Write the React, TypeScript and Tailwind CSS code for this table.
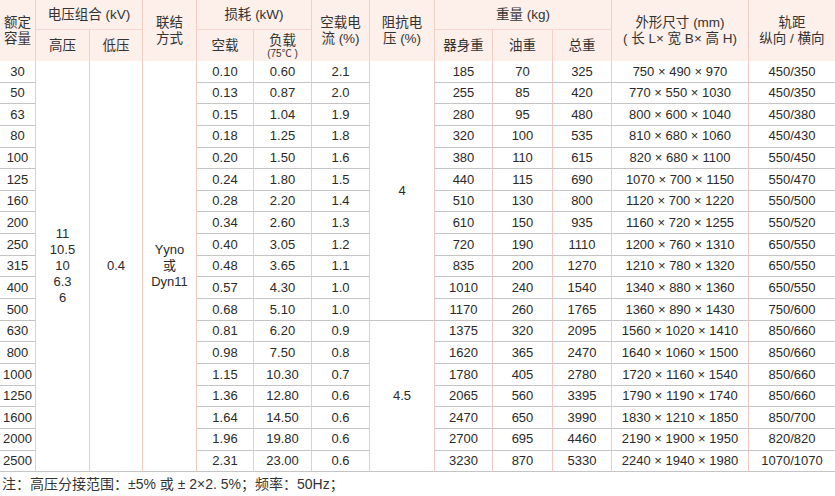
import React from "react";

const rows: [string, string, string, string, string, string, string, string, string][] = [
  ["30", "0.10", "0.60", "2.1", "185", "70", "325", "750 × 490 × 970", "450/350"],
  ["50", "0.13", "0.87", "2.0", "255", "85", "420", "770 × 550 × 1030", "450/350"],
  ["63", "0.15", "1.04", "1.9", "280", "95", "480", "800 × 600 × 1040", "450/380"],
  ["80", "0.18", "1.25", "1.8", "320", "100", "535", "810 × 680 × 1060", "450/430"],
  ["100", "0.20", "1.50", "1.6", "380", "110", "615", "820 × 680 × 1100", "550/450"],
  ["125", "0.24", "1.80", "1.5", "440", "115", "690", "1070 × 700 × 1150", "550/470"],
  ["160", "0.28", "2.20", "1.4", "510", "130", "800", "1120 × 700 × 1220", "550/500"],
  ["200", "0.34", "2.60", "1.3", "610", "150", "935", "1160 × 720 × 1255", "550/520"],
  ["250", "0.40", "3.05", "1.2", "720", "190", "1110", "1200 × 760 × 1310", "650/550"],
  ["315", "0.48", "3.65", "1.1", "835", "200", "1270", "1210 × 780 × 1320", "650/550"],
  ["400", "0.57", "4.30", "1.0", "1010", "240", "1540", "1340 × 880 × 1360", "650/550"],
  ["500", "0.68", "5.10", "1.0", "1170", "260", "1765", "1360 × 890 × 1430", "750/600"],
  ["630", "0.81", "6.20", "0.9", "1375", "320", "2095", "1560 × 1020 × 1410", "850/660"],
  ["800", "0.98", "7.50", "0.8", "1620", "365", "2470", "1640 × 1060 × 1500", "850/660"],
  ["1000", "1.15", "10.30", "0.7", "1780", "405", "2780", "1720 × 1160 × 1540", "850/660"],
  ["1250", "1.36", "12.80", "0.6", "2065", "560", "3395", "1790 × 1190 × 1740", "850/660"],
  ["1600", "1.64", "14.50", "0.6", "2470", "650", "3990", "1830 × 1210 × 1850", "850/700"],
  ["2000", "1.96", "19.80", "0.6", "2700", "695", "4460", "2190 × 1900 × 1950", "820/820"],
  ["2500", "2.31", "23.00", "0.6", "3230", "870", "5330", "2240 × 1940 × 1980", "1070/1070"],
];

const hd = "flex items-center justify-center text-center bg-[#fdefea] border-r border-[#f5cfc7] leading-[16px] text-[13.5px] text-[#333]";
const hdLast = "flex items-center justify-center text-center bg-[#fdefea] leading-[16px] text-[13.5px] text-[#333]";
const hdTop = "border-b border-b-[#f5d6cf]";
const cell = "flex items-center justify-center border-r border-r-[#f6c8c0] border-b border-b-[#c4c4c4]";
const cellLast = "flex items-center justify-center border-b border-b-[#c4c4c4]";

export default function App() {
  return (
    <div
      className="w-[835px] h-[496px] bg-white text-[13px] text-[#2a2a2a]"
      style={{ fontFamily: '"Liberation Sans", "Noto Sans CJK SC", sans-serif' }}
    >
      <div className="grid grid-cols-[36px_54px_53px_54px_57px_58px_58px_65px_58px_60px_59px_137px_86px] grid-rows-[30px_31px_repeat(19,21.65px)]">
        {/* header row 1 */}
        <div className={`${hd} row-span-2`}>额定<br />容量</div>
        <div className={`${hd} ${hdTop} col-span-2`}>电压组合 (kV)</div>
        <div className={`${hd} row-span-2`}>联结<br />方式</div>
        <div className={`${hd} ${hdTop} col-span-2`}>损耗 (kW)</div>
        <div className={`${hd} row-span-2`}>空载电<br />流 (%)</div>
        <div className={`${hd} row-span-2`}>阻抗电<br />压 (%)</div>
        <div className={`${hd} ${hdTop} col-span-3`}>重量 (kg)</div>
        <div className={`${hd} row-span-2`}>外形尺寸 (mm)<br />( 长 L× 宽 B× 高 H)</div>
        <div className={`${hdLast} row-span-2`}>轨距<br />纵向 / 横向</div>
        {/* header row 2 */}
        <div className={hd}>高压</div>
        <div className={hd}>低压</div>
        <div className={hd}>空载</div>
        <div className={`${hd} flex-col`}>
          <span className="leading-[15px]">负载</span>
          <span className="text-[10px] leading-[11px]">(75℃ )</span>
        </div>
        <div className={hd}>器身重</div>
        <div className={hd}>油重</div>
        <div className={hd}>总重</div>
        {/* data */}
        {rows.map((r, i) => (
          <React.Fragment key={r[0]}>
            <div className={cell}>{r[0]}</div>
            {i === 0 && (
              <>
                <div className={`${cell} row-span-19 flex-col leading-[16px]`}>
                  <span>11</span>
                  <span>10.5</span>
                  <span>10</span>
                  <span>6.3</span>
                  <span>6</span>
                </div>
                <div className={`${cell} row-span-19`}>0.4</div>
                <div className={`${cell} row-span-19 flex-col leading-[16px]`}>
                  <span>Yyno</span>
                  <span>或</span>
                  <span>Dyn11</span>
                </div>
              </>
            )}
            <div className={cell}>{r[1]}</div>
            <div className={cell}>{r[2]}</div>
            <div className={cell}>{r[3]}</div>
            {i === 0 && <div className={`${cell} row-span-12`}>4</div>}
            {i === 12 && <div className={`${cell} row-span-7`}>4.5</div>}
            <div className={cell}>{r[4]}</div>
            <div className={cell}>{r[5]}</div>
            <div className={cell}>{r[6]}</div>
            <div className={cell}>{r[7]}</div>
            <div className={cellLast}>{r[8]}</div>
          </React.Fragment>
        ))}
      </div>
      <div className="pl-[2px] pt-[4px] leading-[17px] text-[14px] text-[#333]">注：高压分接范围：±5% 或 ± 2×2. 5%；频率：50Hz；</div>
    </div>
  );
}
